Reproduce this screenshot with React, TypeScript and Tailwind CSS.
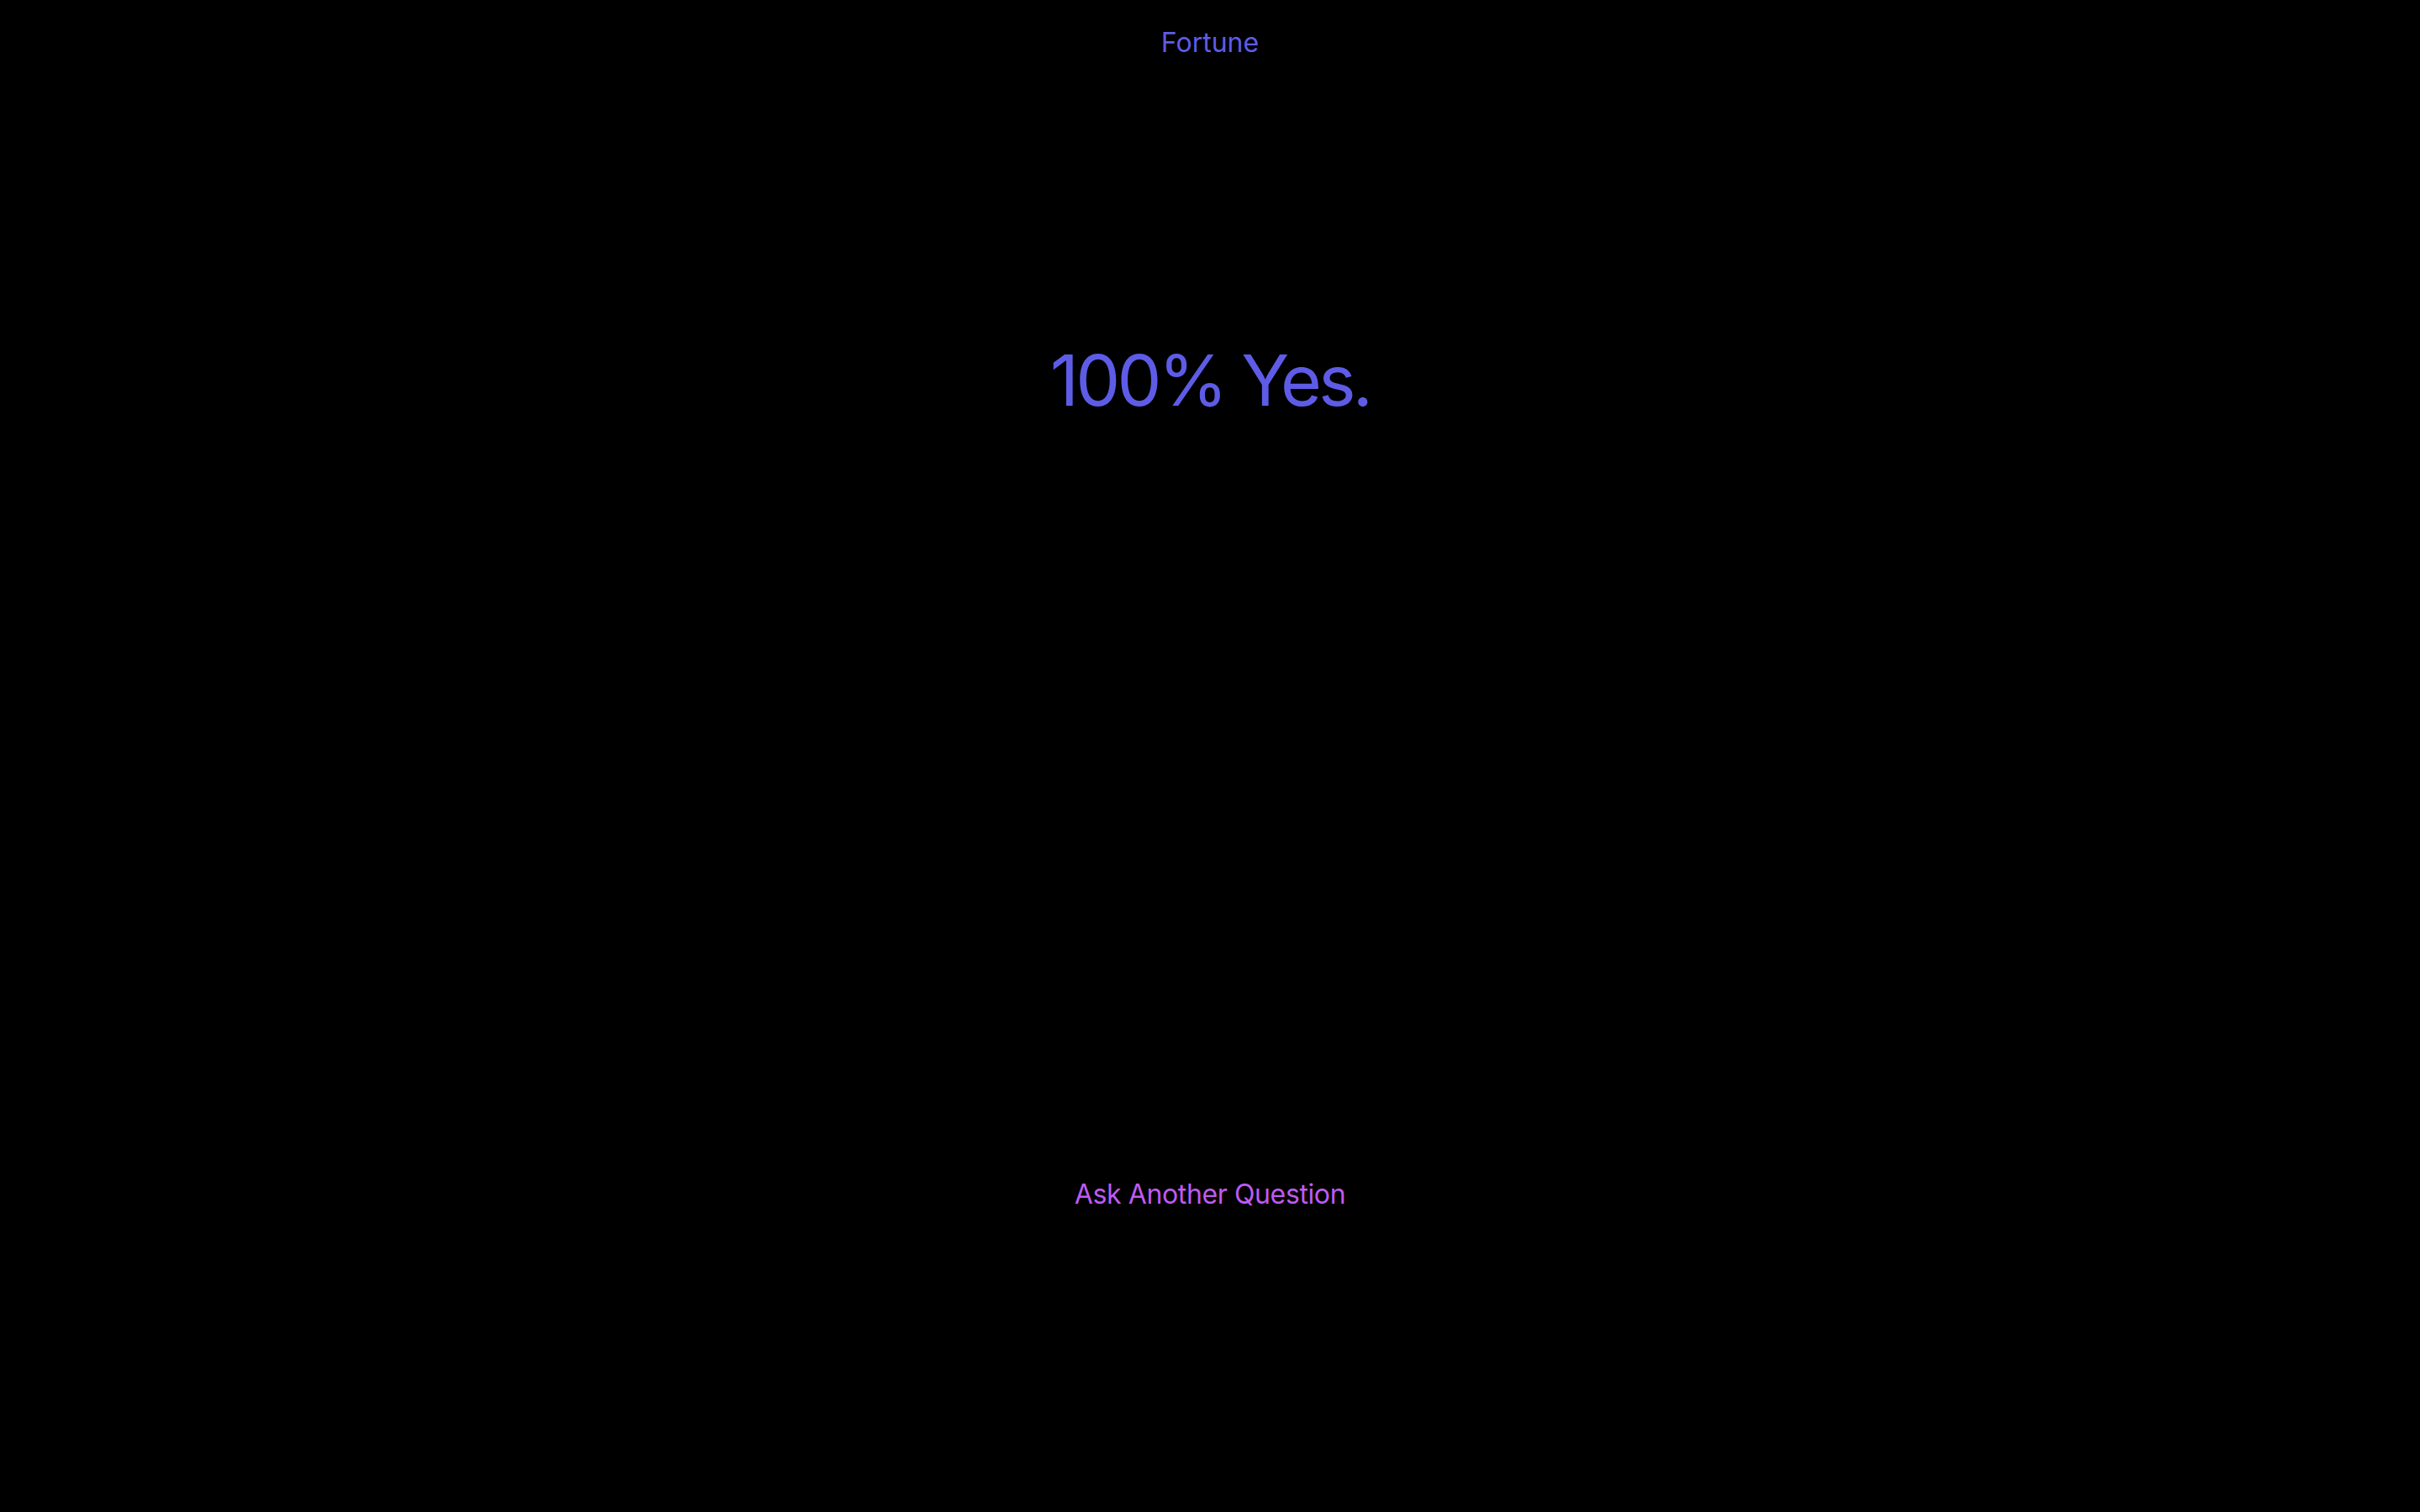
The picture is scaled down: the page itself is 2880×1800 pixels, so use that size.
export default function App() {
  return (
    <main className="flex min-h-screen flex-col items-center bg-black pt-[35px] font-['Inter','Noto_Sans',sans-serif]">
      <h1 className="text-[32px] leading-none text-[#5e5ce6]">Fortune</h1>
      <p className="mt-[344px] text-[84px] leading-none tracking-[-0.045em] text-[#5e5ce6]">100% Yes.</p>
      <button type="button" className="mt-[911px] text-[32px] leading-none tracking-[-0.012em] text-[#bf5af2]">
        Ask Another Question
      </button>
    </main>
  );
}
